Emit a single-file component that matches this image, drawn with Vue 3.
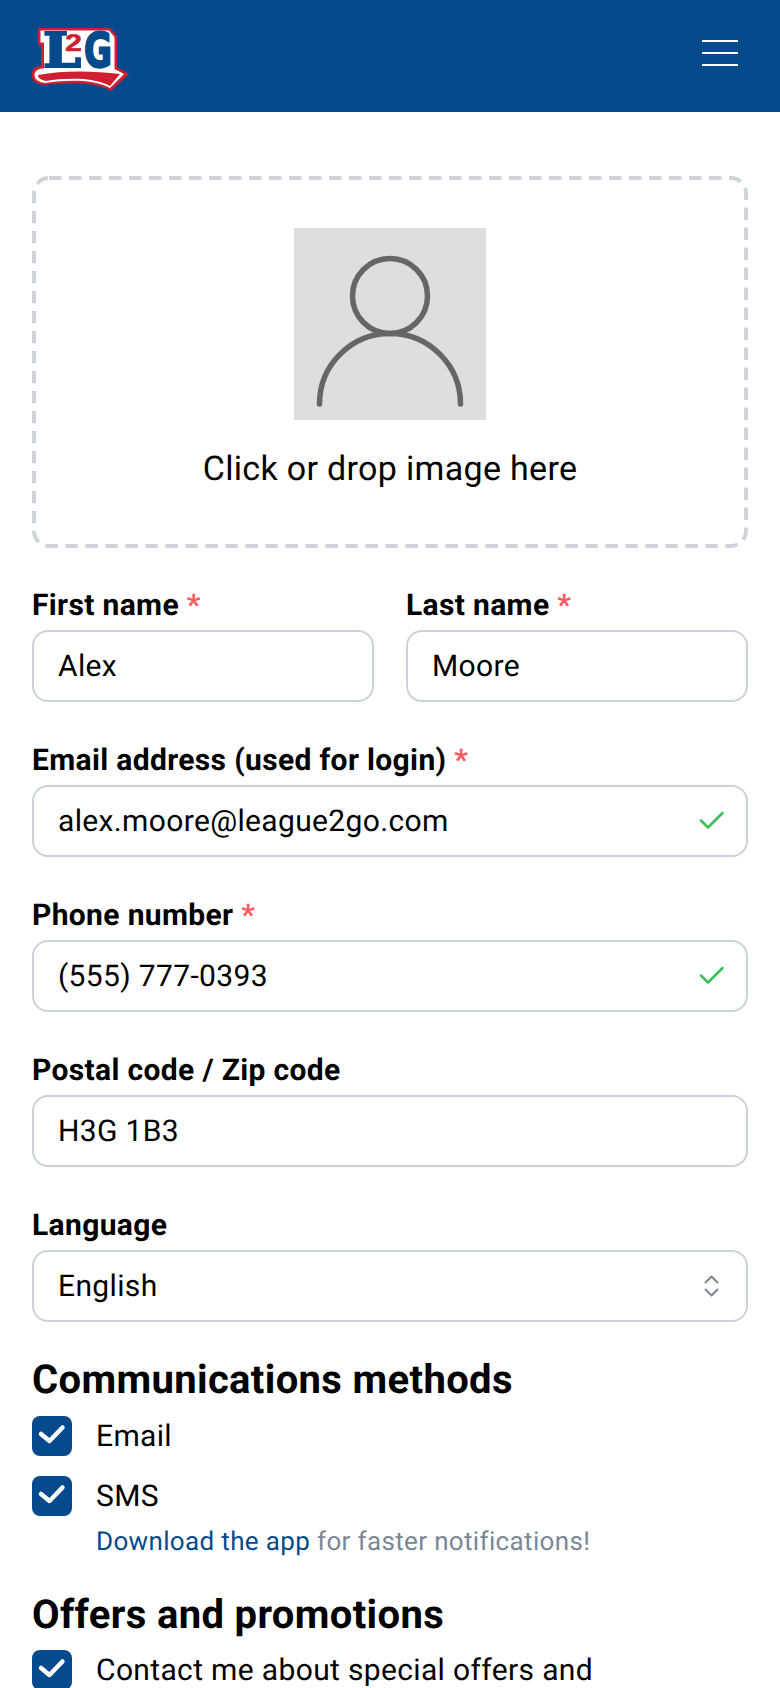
<template>
  <div class="page">
    <header class="topbar">
      <svg class="logo" viewBox="30 12 102 84" aria-label="L2G">
        <path d="M38 24H110L117 32V63L129 70L111 87C92 77 68 79 44 81C35 80 31 76 32 70C32 65 35 62 41 62V41H38Z" fill="#d01f30" />
        <path d="M40.500 26.500H109L114.500 33V65L124 70L110 84C92 75 68 76 45 79C38 78 34.500 75 34.500 71C34.500 67 38 64.500 44 64.500V38.500H40.500Z" fill="#fff" />
        <text x="43" y="63" class="logo-l" textLength="38" lengthAdjust="spacingAndGlyphs">L</text>
        <text x="65" y="46.500" class="logo-two" textLength="17" lengthAdjust="spacingAndGlyphs">2</text>
        <text x="84" y="63" class="logo-g" textLength="28" lengthAdjust="spacingAndGlyphs">G</text>
        <path d="M38 71C62 66.500 92 66.500 120 70L110 82C92 73 66 74 46 77C41 76 38 74 38 71Z" fill="#d01f30" />
      </svg>
      <button class="menu" type="button" aria-label="Menu">
        <span></span>
        <span></span>
        <span></span>
      </button>
    </header>

    <form class="form" @submit.prevent>
      <div class="dropzone">
        <svg class="dashes" viewBox="0 0 716 372">
          <rect x="2" y="2" width="712" height="368" rx="15" />
        </svg>
        <svg class="avatar" viewBox="0 0 192 192">
          <circle cx="96" cy="68" r="37.5" />
          <path d="M25.5 176A70.5 70.5 0 0 1 166.5 176" />
        </svg>
        <p>Click or drop image here</p>
      </div>

      <div class="name-row">
        <div class="field">
          <label>First name <em>*</em></label>
          <div class="control"><input v-model="firstName" type="text" /></div>
        </div>
        <div class="field">
          <label>Last name <em>*</em></label>
          <div class="control"><input v-model="lastName" type="text" /></div>
        </div>
      </div>

      <div class="field">
        <label>Email address (used for login) <em>*</em></label>
        <div class="control">
          <input v-model="email" type="text" />
          <svg class="valid" viewBox="0 0 26 20"><path d="M2 9.5L9 16.5L23.500 2" /></svg>
        </div>
      </div>

      <div class="field">
        <label>Phone number <em>*</em></label>
        <div class="control">
          <input v-model="phone" type="text" />
          <svg class="valid" viewBox="0 0 26 20"><path d="M2 9.5L9 16.5L23.500 2" /></svg>
        </div>
      </div>

      <div class="field">
        <label>Postal code / Zip code</label>
        <div class="control"><input v-model="postal" type="text" /></div>
      </div>

      <div class="field">
        <label>Language</label>
        <div class="control">
          <select v-model="language">
            <option>English</option>
          </select>
          <svg class="chevrons" viewBox="0 0 15 22"><path d="M1.500 7.500L7.500 1.500L13.500 7.500M1.500 14.500L7.500 20.500L13.500 14.500" /></svg>
        </div>
      </div>

      <h2>Communications methods</h2>
      <div class="check-row" v-for="item in methods" :key="item">
        <span class="box">
          <svg viewBox="0 0 40 40"><path d="M9 18L17.500 25L30.500 11.500" /></svg>
        </span>
        <span class="check-text">{{ item }}</span>
      </div>
      <p class="hint"><a href="#">Download the app</a> for faster notifications!</p>

      <h2 class="offers">Offers and promotions</h2>
      <div class="check-row">
        <span class="box">
          <svg viewBox="0 0 40 40"><path d="M9 18L17.500 25L30.500 11.500" /></svg>
        </span>
        <span class="check-text">Contact me about special offers and</span>
      </div>
    </form>
  </div>
</template>

<script setup>
import { ref } from 'vue'

const firstName = ref('Alex')
const lastName = ref('Moore')
const email = ref('alex.moore@league2go.com')
const phone = ref('(555) 777-0393')
const postal = ref('H3G 1B3')
const language = ref('English')
const methods = ['Email', 'SMS']
</script>

<style>
html,
body {
  margin: 0;
  background: #fff;
}
</style>

<style scoped>
.page {
  height: 1688px;
  overflow: hidden;
  font-family: Roboto, "Liberation Sans", sans-serif;
  color: #000;
  letter-spacing: 0.35px;
  text-rendering: geometricPrecision;
}

.topbar {
  display: flex;
  align-items: center;
  justify-content: space-between;
  height: 112px;
  padding: 0 42px 0 30px;
  box-sizing: border-box;
  background: #044a8d;
}

.logo {
  width: 102px;
  height: 84px;
  margin-top: 4px;
  letter-spacing: 0;
}

.logo-l,
.logo-two,
.logo-g {
  font-weight: 700;
  fill: #044a8d;
  stroke: #044a8d;
  stroke-width: 2;
}

.logo-l {
  font-family: "DejaVu Serif", serif;
  font-size: 48px;
}

.logo-two {
  font-family: "Liberation Sans", sans-serif;
  font-size: 24px;
  fill: #d01f30;
  stroke: #d01f30;
  stroke-width: 0.5;
}

.logo-g {
  font-family: "DejaVu Sans", sans-serif;
  font-size: 48px;
}

.menu {
  display: flex;
  flex-direction: column;
  gap: 10px;
  width: 36px;
  margin-bottom: 6px;
  padding: 0;
  border: 0;
  background: none;
}

.menu span {
  display: block;
  height: 2px;
  background: #fff;
}

.form {
  padding: 64px 32px 0;
}

.dropzone {
  position: relative;
  display: flex;
  flex-direction: column;
  align-items: center;
  box-sizing: border-box;
  height: 372px;
  padding-top: 52px;
}

.dashes {
  position: absolute;
  inset: 0;
  width: 100%;
  height: 100%;
  fill: none;
  stroke: #cfd4db;
  stroke-width: 4;
  stroke-dasharray: 12.500 7.500;
}

.dropzone p {
  margin: 29px 0 0;
  font-size: 34px;
  line-height: 40px;
  letter-spacing: 0.32px;
}

.avatar {
  display: block;
  width: 192px;
  height: 192px;
  background: #dedede;
  fill: none;
  stroke: #666;
  stroke-width: 5.500;
  stroke-linecap: round;
}

.name-row {
  display: grid;
  grid-template-columns: 1fr 1fr;
  gap: 32px;
}

.field {
  margin-top: 41px;
}

.name-row .field {
  margin-top: 40px;
}

label {
  display: block;
  margin-bottom: 6px;
  font-size: 30px;
  font-weight: 700;
  line-height: 36px;
}

label em {
  color: #fb5a60;
  font-style: normal;
}

.control {
  position: relative;
}

input,
select {
  display: block;
  width: 100%;
  height: 72px;
  box-sizing: border-box;
  padding: 0 24px;
  border: 2px solid #cbd2d9;
  border-radius: 16px;
  outline: none;
  appearance: none;
  background: #fff;
  color: #000;
  font-family: inherit;
  font-size: 30px;
  letter-spacing: 0.35px;
  text-rendering: geometricPrecision;
}

.valid {
  position: absolute;
  top: 26px;
  right: 23px;
  width: 26px;
  height: 20px;
  fill: none;
  stroke: #38c15a;
  stroke-width: 2.500;
  stroke-linecap: round;
  stroke-linejoin: round;
}

.chevrons {
  position: absolute;
  top: 25px;
  right: 29px;
  width: 15px;
  height: 22px;
  fill: none;
  stroke: #7b8794;
  stroke-width: 2;
  stroke-linecap: round;
  stroke-linejoin: round;
}

h2 {
  margin: 30px 0 0;
  font-size: 40px;
  font-weight: 700;
  line-height: 56px;
}

.check-row {
  display: flex;
  align-items: flex-start;
  gap: 24px;
  margin-top: 20px;
  font-size: 30px;
  line-height: 40px;
}

.check-text {
  height: 40px;
  line-height: 42px;
}

h2 + .check-row {
  margin-top: 8px;
}

.box {
  display: flex;
  flex: none;
  width: 40px;
  height: 40px;
  border-radius: 8px;
  background: #044a8d;
}

.box svg {
  width: 40px;
  height: 40px;
  fill: none;
  stroke: #fff;
  stroke-width: 4.500;
  stroke-linecap: round;
  stroke-linejoin: round;
}

.hint {
  margin: 8px 0 0 64px;
  color: #7b8794;
  font-size: 26px;
  line-height: 36px;
}

.hint a {
  color: #044a8d;
  text-decoration: none;
}

.offers {
  margin-top: 27px;
}

.offers + .check-row {
  margin-top: 7px;
}
</style>
